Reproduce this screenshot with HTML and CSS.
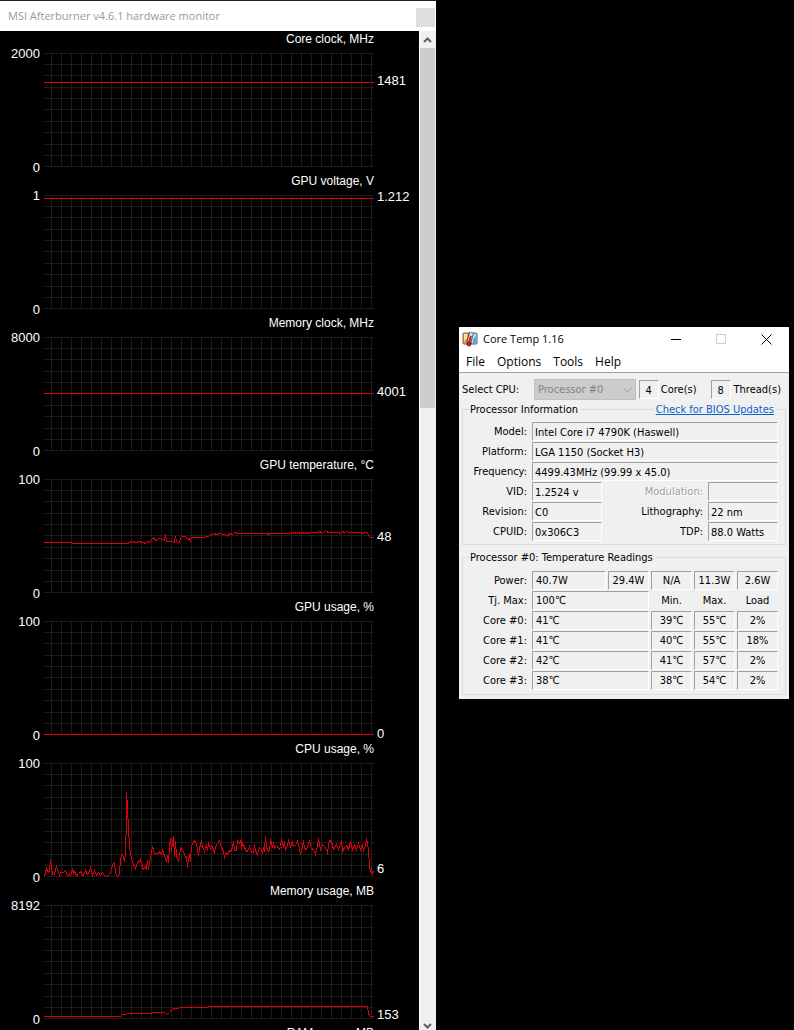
FILE: index.html
```html
<!DOCTYPE html>
<html lang="en">
<head>
<meta charset="utf-8">
<title>Hardware monitor</title>
<link rel="stylesheet" href="styles.css">
</head>
<body>
<svg class="defs" aria-hidden="true">
  <symbol id="grid" viewBox="-0.5 -0.5 330 114" preserveAspectRatio="none">
    <path class="grid-line" d="M-.5 0H330M-.5 11H330M-.5 22H330M-.5 34H330M-.5 45H330M-.5 56H330M-.5 68H330M-.5 79H330M-.5 91H330M-.5 102H330M-.5 113H330M7 0V113M17 0V113M27 0V113M37 0V113M47 0V113M57 0V113M67 0V113M77 0V113M87 0V113M97 0V113M107 0V113M117 0V113M127 0V113M137 0V113M147 0V113M157 0V113M167 0V113M177 0V113M187 0V113M197 0V113M207 0V113M217 0V113M227 0V113M237 0V113M247 0V113M257 0V113M267 0V113M277 0V113M287 0V113M297 0V113M307 0V113M317 0V113M327 0V113"/>
  </symbol>
</svg>
<main class="desktop">
  <section class="monitor" aria-label="MSI Afterburner">
    <header class="monitor-bar">
      <h1 class="monitor-title">MSI Afterburner v4.6.1 hardware monitor</h1>
      <button class="monitor-close" aria-label="Close"></button>
    </header>
    <div class="monitor-body">
      <div class="charts">
        <article class="chart">
          <h2 class="chart-title">Core clock, MHz</h2>
          <div class="scale"><span>2000</span><span>0</span></div>
          <svg class="plot" viewBox="-0.5 -0.5 330 114" preserveAspectRatio="none"><use href="#grid" x="-0.5" y="-0.5" width="330" height="114"/><polyline class="trace" points="-0.5,29 329,29"/></svg>
          <div class="now"><span style="margin-top:20px">1481</span></div>
        </article>
        <article class="chart">
          <h2 class="chart-title">GPU voltage, V</h2>
          <div class="scale"><span>1</span><span>0</span></div>
          <svg class="plot" viewBox="-0.5 -0.5 330 114" preserveAspectRatio="none"><use href="#grid" x="-0.5" y="-0.5" width="330" height="114"/><polyline class="trace" points="-0.5,3 329,3"/></svg>
          <div class="now"><span style="margin-top:-6px">1.212</span></div>
        </article>
        <article class="chart">
          <h2 class="chart-title">Memory clock, MHz</h2>
          <div class="scale"><span>8000</span><span>0</span></div>
          <svg class="plot" viewBox="-0.5 -0.5 330 114" preserveAspectRatio="none"><use href="#grid" x="-0.5" y="-0.5" width="330" height="114"/><polyline class="trace" points="-0.5,56 329,56"/></svg>
          <div class="now"><span style="margin-top:47px">4001</span></div>
        </article>
        <article class="chart">
          <h2 class="chart-title">GPU temperature, °C</h2>
          <div class="scale"><span>100</span><span>0</span></div>
          <svg class="plot" viewBox="-0.5 -0.5 330 114" preserveAspectRatio="none"><use href="#grid" x="-0.5" y="-0.5" width="330" height="114"/><polyline class="trace" points="-0.5,63 27,63 28,64 83,64 85,63 87,62 88,63 89,62 91,63 95,62 97,63 99,63 101,64 103,62 105,63 107,60 109,58 110,60 112,61 114,59 119,60 120,61 121,55 122,62 128,62 129,63 130,63 131,57 132,62 133,63 135,63 136,59 138,57 141,57 143,60 145,59 146,61 147,58 158,58 164,57 166,55 169,55 170,54 172,55 174,54 181,55 183,57 184,55 186,54 188,55 190,53 194,54 222,54 224,55 226,54 248,54 250,53 252,54 254,53 256,54 258,53 260,54 262,53 264,54 266,53 273,53 275,52 277,53 279,53 281,51 282,52 284,53 294,53 296,54 298,52 300,53 303,52 304,53 316,53 318,54 320,53 323,53 324,56 326,58 329,58"/></svg>
          <div class="now"><span style="margin-top:50px">48</span></div>
        </article>
        <article class="chart">
          <h2 class="chart-title">GPU usage, %</h2>
          <div class="scale"><span>100</span><span>0</span></div>
          <svg class="plot" viewBox="-0.5 -0.5 330 114" preserveAspectRatio="none"><use href="#grid" x="-0.5" y="-0.5" width="330" height="114"/><polyline class="trace" points="-0.5,113 329,113"/></svg>
          <div class="now"><span style="margin-top:105px">0</span></div>
        </article>
        <article class="chart">
          <h2 class="chart-title">CPU usage, %</h2>
          <div class="scale"><span>100</span><span>0</span></div>
          <svg class="plot" viewBox="-0.5 -0.5 330 114" preserveAspectRatio="none"><use href="#grid" x="-0.5" y="-0.5" width="330" height="114"/><polyline class="trace" points="0,113 1,109 2,105 4,109 5,108 6,96 8,111 10,111 12,103 14,109 15,112 16,109 19,109 21,107 23,113 25,110 26,113 28,106 29,110 30,108 32,112 34,111 36,108 38,112 40,111 41,107 43,111 45,108 46,103 48,112 50,107 52,112 54,109 56,112 58,109 60,112 63,113 65,110 67,107 68,101 70,99 71,110 73,113 75,112 76,94 78,91 80,98 81,90 82,54 82,29 83,44 84,67 85,82 86,90 87,95 89,101 91,105 93,99 95,98 96,96 98,104 99,106 101,103 102,105 103,97 104,106 105,100 106,95 107,88 108,83 109,87 110,90 114,90 115,88 117,91 118,86 119,90 120,92 122,99 123,92 124,99 125,82 126,75 127,88 128,78 129,73 130,93 131,78 132,93 134,97 135,94 136,84 138,87 139,88 141,94 142,93 143,104 144,96 145,91 146,98 147,82 149,79 150,77 152,80 153,87 154,92 155,85 157,77 158,83 160,88 162,81 163,87 164,80 166,85 167,82 169,86 170,90 171,83 173,80 175,77 177,84 179,88 180,95 181,89 183,91 185,87 186,88 188,84 189,78 190,87 192,87 193,77 195,80 197,76 197,86 198,80 200,84 202,88 204,87 205,83 207,89 209,89 210,81 211,87 213,91 214,88 215,84 217,86 218,90 219,85 220,87 221,73 222,84 224,88 225,87 226,76 228,84 229,79 230,85 232,82 235,86 236,83 237,75 239,84 240,78 241,87 243,82 244,77 246,83 248,79 249,83 252,81 253,77 255,86 256,91 258,83 259,77 260,85 262,86 264,80 265,78 267,85 269,86 271,91 273,82 274,75 276,86 278,81 281,84 283,89 285,77 287,78 289,86 291,83 292,81 294,86 297,77 298,88 300,84 302,82 304,86 306,78 308,86 310,82 312,86 314,80 316,86 318,82 319,87 321,82 322,75 324,86 325,103 326,108 327,105 328,110 329,108"/></svg>
          <div class="now"><span style="margin-top:98px">6</span></div>
        </article>
        <article class="chart">
          <h2 class="chart-title">Memory usage, MB</h2>
          <div class="scale"><span>8192</span><span>0</span></div>
          <svg class="plot" viewBox="-0.5 -0.5 330 114" preserveAspectRatio="none"><use href="#grid" x="-0.5" y="-0.5" width="330" height="114"/><polyline class="trace" points="-0.5,111 76,111 78,109 82,109 83,108 107,108 108,107 120,107 122,109 125,107 127,104 131,103 138,102 148,102 149,101 150,102 163,102 164,101 323,101 324,108 325,110 326,111 329,111"/></svg>
          <div class="now"><span style="margin-top:102px">153</span></div>
        </article>
        <article class="chart">
          <h2 class="chart-title">RAM usage, MB</h2>
        </article>
      </div>
      <div class="scrollbar">
        <button class="scroll-step" aria-label="Scroll up"><svg width="9" height="6" viewBox="0 0 9 6"><path d="M1 5 4.500 1.500 8 5"/></svg></button>
        <div class="scroll-thumb"></div>
        <button class="scroll-step scroll-down" aria-label="Scroll down"><svg width="9" height="6" viewBox="0 0 9 6"><path d="M1 1 4.500 4.500 8 1"/></svg></button>
      </div>
    </div>
  </section>

  <div class="side">
    <section class="coretemp" aria-label="Core Temp">
      <header class="ct-bar">
        <svg class="ct-icon" width="16" height="16" viewBox="0 0 16 16">
          <rect x="1" y="2" width="6" height="11" rx="1" fill="#f6a04a" stroke="#8b5a3a"/>
          <rect x="9" y="2" width="6" height="11" rx="1" fill="#b9dcf4" stroke="#47637c"/>
          <path d="M2 3h3v4L2 10z" fill="#ffe2ae"/>
          <path d="M11 9l3-4v7h-3z" fill="#5ba5dc"/>
          <path d="M9.500 1.500 6.500 12" fill="none" stroke="#555" stroke-width="5"/>
          <path d="M9.500 2 7 11" fill="none" stroke="#dcdcdc" stroke-width="3"/>
          <path d="M9 5 7 12" fill="none" stroke="#d71920" stroke-width="2"/>
          <circle cx="7" cy="13" r="2" fill="#d71920" stroke="#732020"/>
        </svg>
        <h1 class="ct-title">Core Temp 1.16</h1>
        <button class="win-btn" aria-label="Minimize"><svg width="11" height="11" viewBox="0 0 11 11"><path d="M0 5.500H10"/></svg></button>
        <button class="win-btn" aria-label="Maximize" disabled><svg width="11" height="11" viewBox="0 0 11 11"><path d="M.5.5h9v9h-9z"/></svg></button>
        <button class="win-btn" aria-label="Close"><svg width="11" height="11" viewBox="0 0 11 11"><path d="M.5.5l10 10M10.500.5l-10 10"/></svg></button>
      </header>
      <nav class="ct-menu"><button>File</button><button>Options</button><button>Tools</button><button>Help</button></nav>
      <div class="ct-body">
        <div class="select-row">
          <label class="select-label" for="cpu">Select CPU:</label>
          <span class="select-wrap"><select id="cpu" disabled><option>Processor #0</option></select><svg width="9" height="6" viewBox="0 0 9 6"><path d="M.5 1 4.500 5 8.500 1"/></svg></span>
          <input class="sunken count" id="cores" value="4" readonly><label class="count-label" for="cores">Core(s)</label>
          <input class="sunken count threads" id="threads" value="8" readonly><label class="count-label" for="threads">Thread(s)</label>
        </div>
        <section class="group">
          <div class="group-head"><h2>Processor Information</h2><a href="#bios">Check for BIOS Updates</a></div>
          <div class="info">
            <label for="model">Model:</label><input class="sunken wide" id="model" value="Intel Core i7 4790K (Haswell)" readonly>
            <label for="platform">Platform:</label><input class="sunken wide" id="platform" value="LGA 1150 (Socket H3)" readonly>
            <label for="freq">Frequency:</label><input class="sunken wide" id="freq" value="4499.43MHz (99.99 x 45.0)" readonly>
            <label for="vid">VID:</label><input class="sunken" id="vid" value="1.2524 v" readonly>
            <label class="off" for="mod">Modulation:</label><input class="sunken" id="mod" value="" readonly>
            <label for="rev">Revision:</label><input class="sunken" id="rev" value="C0" readonly>
            <label for="lith">Lithography:</label><input class="sunken" id="lith" value="22 nm" readonly>
            <label for="cpuid">CPUID:</label><input class="sunken" id="cpuid" value="0x306C3" readonly>
            <label for="tdp">TDP:</label><input class="sunken" id="tdp" value="88.0 Watts" readonly>
          </div>
        </section>
        <section class="group temps">
          <div class="group-head"><h2>Processor #0: Temperature Readings</h2></div>
          <table class="readings">
            <colgroup><col class="c-label"><col><col class="c-num"><col class="c-num"><col class="c-num"><col class="c-num"></colgroup>
            <tr><th>Power:</th><td>40.7W</td><td class="mid">29.4W</td><td class="mid">N/A</td><td class="mid">11.3W</td><td class="mid">2.6W</td></tr>
            <tr><th>Tj. Max:</th><td colspan="2">100℃</td><th class="top">Min.</th><th class="top">Max.</th><th class="top">Load</th></tr>
            <tr><th>Core #0:</th><td colspan="2">41℃</td><td class="mid">39℃</td><td class="mid">55℃</td><td class="mid">2%</td></tr>
            <tr><th>Core #1:</th><td colspan="2">41℃</td><td class="mid">40℃</td><td class="mid">55℃</td><td class="mid">18%</td></tr>
            <tr><th>Core #2:</th><td colspan="2">42℃</td><td class="mid">41℃</td><td class="mid">57℃</td><td class="mid">2%</td></tr>
            <tr><th>Core #3:</th><td colspan="2">38℃</td><td class="mid">38℃</td><td class="mid">54℃</td><td class="mid">2%</td></tr>
          </table>
        </section>
      </div>
    </section>
  </div>
</main>
</body>
</html>
```
FILE: styles.css
```css
* { box-sizing: border-box; }
body { margin: 0; background: #000; }
h1, h2 { margin: 0; font-weight: 400; }
button { border: 0; padding: 0; background: none; font: inherit; color: inherit; }
.defs { display: none; }

.desktop {
  display: grid;
  grid-template-columns: 436fr 358fr;
  height: 100vh;
  overflow: hidden;
}

/* Afterburner monitor */
.monitor {
  display: flex;
  flex-direction: column;
  min-width: 0;
  height: 100vh;
  background: #000;
  border-top: 1px solid #2b1a2a;
}
.monitor-bar {
  flex: none;
  display: flex;
  align-items: center;
  justify-content: space-between;
  height: 30px;
  padding-left: 8px;
  background: #fff;
}
.monitor-title { font: 11px/16px "Open Sans", "Noto Sans", sans-serif; color: #9a9a9a; }
.monitor-close {
  width: 19px;
  height: 19px;
  margin: 3px 1px 0 0;
  background: repeating-conic-gradient(#d6d6d6 0 25%, #e6e6e6 0 50%) 0 0 / 2px 2px;
}
.monitor-body { flex: 1; min-height: 0; display: flex; }
.charts {
  flex: 1;
  min-width: 0;
  overflow: hidden;
  font: 13px/16px "Liberation Sans", Arial, sans-serif;
  color: #fff;
}
.chart {
  display: grid;
  grid-template-columns: 44px 1fr 45px;
  grid-template-rows: 22px 114px;
  height: 142px;
}
.chart-title {
  grid-column: 1 / 3;
  font-size: 12px;
  line-height: 16px;
  text-align: right;
  white-space: nowrap;
}
.scale {
  grid-column: 1;
  display: flex;
  flex-direction: column;
  justify-content: space-between;
  margin: -7px 4px -9px 0;
  text-align: right;
}
.plot { display: block; width: 100%; height: 114px; }
.grid-line { fill: none; stroke: #1c1c1c; stroke-width: 1; shape-rendering: crispEdges; }
.trace { fill: none; stroke: #dc000f; stroke-width: 1; shape-rendering: crispEdges; }
.now { display: flex; align-items: flex-start; padding-left: 3px; }

.scrollbar {
  flex: none;
  display: flex;
  flex-direction: column;
  width: 17px;
  padding-right: 1px;
  background: #f0f0f0;
  border-left: 1px solid #fff;
}
.scroll-step { flex: none; display: flex; align-items: center; justify-content: center; height: 17px; }
.scroll-step path { fill: none; stroke: #606060; stroke-width: 2; }
.scroll-thumb { flex: none; height: 36%; background: #cdcdcd; }
.scroll-down { height: 13px; margin-top: auto; align-items: flex-end; padding-bottom: 1px; }

/* Core Temp */
.side { padding: 327px 5px 0 23px; }
.coretemp {
  background: #f0f0f0;
  color: #000;
  font: 11px/14px Tahoma, "DejaVu Sans Condensed", "Noto Sans", sans-serif;
}
.ct-bar { display: flex; align-items: center; height: 24px; padding-left: 3px; background: #fff; }
.ct-title { flex: 1; padding-left: 5px; font: 11px/16px "Open Sans", "Noto Sans", sans-serif; }
.win-btn { width: 45px; height: 22px; display: flex; align-items: center; justify-content: center; }
.win-btn path { fill: none; stroke: #000; }
.win-btn:disabled path { stroke: #ccc; }
.ct-menu {
  display: flex;
  gap: 12px;
  height: 22px;
  padding-left: 7px;
  background: #fff;
  border-bottom: 1px solid #a0a0a0;
  font: 12px/18px "Open Sans", "Noto Sans", sans-serif;
}
.ct-body { padding: 6px 3px 4px; }
.select-row { display: flex; align-items: center; height: 21px; }
.select-label { width: 72px; }
.select-wrap { position: relative; flex: 1; height: 21px; }
.select-wrap select {
  appearance: none;
  width: 100%;
  height: 21px;
  padding: 0 3px;
  border: 1px solid #bfbfbf;
  background: #ccc;
  font: inherit;
  color: #838383;
  opacity: 1;
}
.select-wrap svg { position: absolute; right: 4px; top: 8px; }
.select-wrap path { fill: none; stroke: #999; }
.sunken {
  display: block;
  width: 100%;
  min-width: 0;
  height: 19px;
  padding: 1px 2px 0;
  border: 1px solid;
  border-color: #a0a0a0 #fff #fff #a0a0a0;
  background: #f0f0f0;
  font: inherit;
  color: #000;
}
.sunken.count { flex: none; width: 20px; margin-left: 3px; padding: 1px 0 0; text-align: center; }
.sunken.threads { margin-left: 14px; }
.count-label { padding-left: 2px; }
.select-row .count-label:last-child { padding: 0 5px 0 3px; }

.group { position: relative; padding: 0 7px 3px; border: 1px solid #dcdcdc; border-top: 0; }
.select-row + .group { margin-top: 9px; }
.temps { margin-top: 12px; }
.group::before {
  content: "";
  position: absolute;
  top: 0;
  left: 0;
  right: 0;
  border-top: 1px solid #dcdcdc;
}
.group-head { position: relative; display: flex; justify-content: space-between; height: 13px; padding-right: 1px; }
.group-head h2, .group-head a { height: 14px; margin-top: -6px; background: #f0f0f0; font-size: 11px; line-height: 14px; }
.group-head h2 { padding-right: 3px; }
.group-head a { padding: 0 3px; color: #0a63c9; }
.info {
  display: grid;
  grid-template-columns: 57px 70px 1fr 70px;
  gap: 1px 5px;
  align-items: center;
}
.info label { text-align: right; white-space: nowrap; padding-top: 1px; }
.info .wide { grid-column: span 3; }
.info .off { color: #a0a0a0; text-shadow: 1px 1px #fff; }
.readings { width: calc(100% + 2px); table-layout: fixed; border-spacing: 2px 1px; }
.c-label { width: 58px; }
.c-num { width: 41px; }
.readings th, .readings td { height: 19px; padding: 1px 0 0; font-weight: 400; line-height: 14px; white-space: nowrap; }
.readings th { padding-right: 3px; text-align: right; }
.readings th.top { padding-right: 0; text-align: center; }
.readings td {
  padding: 1px 3px 0;
  border: 1px solid;
  border-color: #a0a0a0 #fff #fff #a0a0a0;
}
.readings td.mid { padding: 1px 0 0; text-align: center; }
```
